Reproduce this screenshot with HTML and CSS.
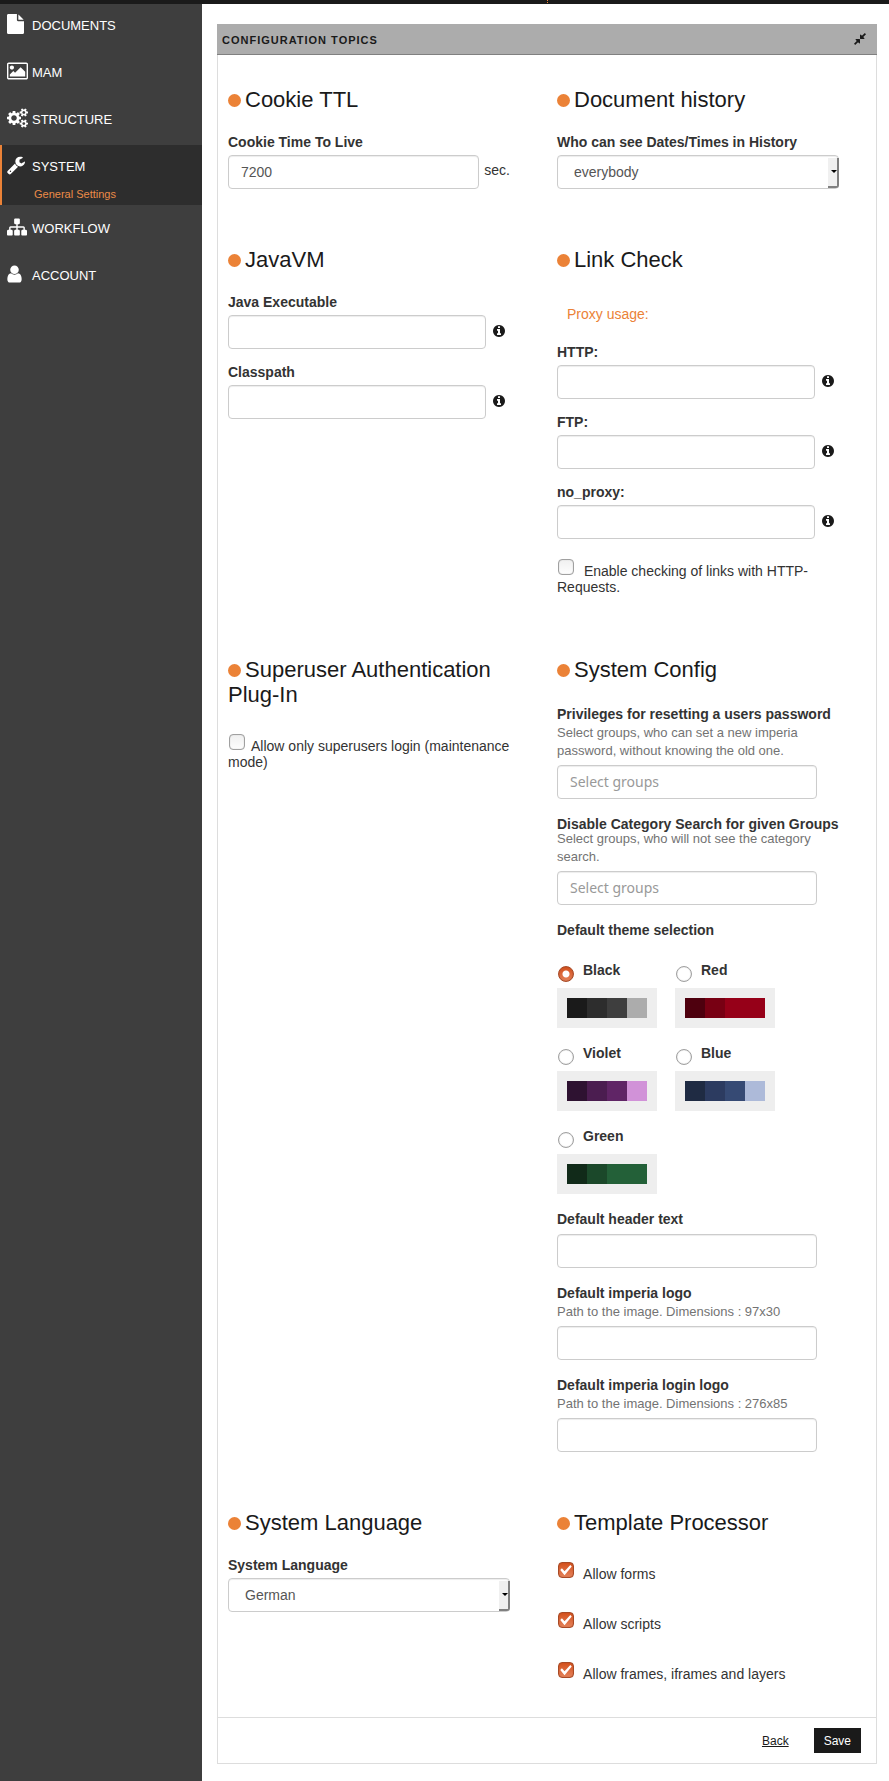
FILE: index.html
```html
<!DOCTYPE html>
<html lang="en">
<head>
<meta charset="utf-8">
<title>General Settings</title>
<link rel="stylesheet" href="styles.css">
</head>
<body>
<svg class="defs" aria-hidden="true">
  <symbol id="info" viewBox="128 128 1536 1536"><path d="M1152 1376v-160q0-14-9-23t-23-9h-96v-512q0-14-9-23t-23-9h-320q-14 0-23 9t-9 23v160q0 14 9 23t23 9h96v320h-96q-14 0-23 9t-9 23v160q0 14 9 23t23 9h448q14 0 23-9t9-23zm-128-896v-160q0-14-9-23t-23-9h-192q-14 0-23 9t-9 23v160q0 14 9 23t23 9h192q14 0 23-9t9-23zm640 416q0 209-103 385.5t-279.5 279.5-385.5 103-385.5-103-279.5-279.5-103-385.5 103-385.5 279.5-279.5 385.5-103 385.5 103 279.5 279.5 103 385.5z"/></symbol>
</svg>
<header class="topbar"><span class="topbar-mark"></span></header>
<div class="layout">
  <nav class="sidebar">
    <ul class="nav">
      <li class="nav-item"><a class="nav-link" href="#"><span class="nav-icon"><svg width="17" height="20" viewBox="128 0 1536 1792"><path d="M1152 512v-472q22 14 36 28l408 408q14 14 28 36h-472zm-128 32q0 40 28 68t68 28h544v1056q0 40-28 68t-68 28h-1344q-40 0-68-28t-28-68v-1600q0-40 28-68t68-28h800v544z"/></svg></span><span class="nav-text">DOCUMENTS</span></a></li>
      <li class="nav-item"><a class="nav-link" href="#"><span class="nav-icon"><svg width="21" height="20" viewBox="-64 0 1920 1792"><path d="M576 576q0 80-56 136t-136 56-136-56-56-136 56-136 136-56 136 56 56 136zm1024 384v448h-1408v-192l320-320 160 160 512-512zm96-704h-1600q-13 0-22.5 9.5t-9.5 22.5v1216q0 13 9.5 22.5t22.5 9.5h1600q13 0 22.5-9.5t9.5-22.5v-1216q0-13-9.5-22.5t-22.5-9.5zm160 32v1216q0 66-47 113t-113 47h-1600q-66 0-113-47t-47-113v-1216q0-66 47-113t113-47h1600q66 0 113 47t47 113z"/></svg></span><span class="nav-text">MAM</span></a></li>
      <li class="nav-item"><a class="nav-link" href="#"><span class="nav-icon"><svg width="21" height="20" viewBox="-64 0 1920 1792"><path d="M832 896q0-106-75-181t-181-75-181 75-75 181 75 181 181 75 181-75 75-181zm768 512q0-52-38-90t-90-38-90 38-38 90q0 53 37.5 90.5t90.5 37.5 90.5-37.5 37.5-90.5zm0-1024q0-52-38-90t-90-38-90 38-38 90q0 53 37.5 90.5t90.5 37.5 90.5-37.5 37.5-90.5zm-384 421v185q0 10-7 19.5t-16 10.5l-155 24q-11 35-32 76 34 48 90 115 7 11 7 20 0 12-7 19-23 30-82.5 89.5t-78.5 59.5q-11 0-21-7l-115-90q-37 19-77 31-11 108-23 155-7 24-30 24h-186q-11 0-20-7.5t-10-17.5l-23-153q-34-10-75-31l-118 89q-7 7-20 7-11 0-21-8-144-133-144-160 0-9 7-19 10-14 41-53t47-61q-23-44-35-82l-152-24q-10-1-17-9.5t-7-19.5v-185q0-10 7-19.5t16-10.5l155-24q11-35 32-76-34-48-90-115-7-11-7-20 0-12 7-20 22-30 82-89t79-59q11 0 21 7l115 90q34-18 77-32 11-108 23-154 7-24 30-24h186q11 0 20 7.5t10 17.5l23 153q34 10 75 31l118-89q8-7 20-7 11 0 21 8 144 133 144 160 0 8-7 19-12 16-42 54t-45 60q23 48 34 82l152 23q10 2 17 10.5t7 19.5zm640 533v140q0 16-149 31-12 27-30 52 51 113 51 138 0 4-4 7-122 71-124 71-8 0-46-47t-52-68q-20 2-30 2t-30-2q-14 21-52 68t-46 47q-2 0-124-71-4-3-4-7 0-25 51-138-18-25-30-52-149-15-149-31v-140q0-16 149-31 13-29 30-52-51-113-51-138 0-4 4-7 4-2 35-20t59-34 30-16q8 0 46 46.5t52 67.5q20-2 30-2t30 2q51-71 92-112l6-2q4 0 124 70 4 3 4 7 0 25-51 138 17 23 30 52 149 15 149 31zm0-1024v140q0 16-149 31-12 27-30 52 51 113 51 138 0 4-4 7-122 71-124 71-8 0-46-47t-52-68q-20 2-30 2t-30-2q-14 21-52 68t-46 47q-2 0-124-71-4-3-4-7 0-25 51-138-18-25-30-52-149-15-149-31v-140q0-16 149-31 13-29 30-52-51-113-51-138 0-4 4-7 4-2 35-20t59-34 30-16q8 0 46 46.5t52 67.5q20-2 30-2t30 2q51-71 92-112l6-2q4 0 124 70 4 3 4 7 0 25-51 138 17 23 30 52 149 15 149 31z"/></svg></span><span class="nav-text">STRUCTURE</span></a></li>
      <li class="nav-item nav-item-active"><a class="nav-link" href="#"><span class="nav-icon"><svg width="18" height="20" viewBox="64 0 1664 1792"><path d="M448 1472q0-26-19-45t-45-19-45 19-19 45 19 45 45 19 45-19 19-45zm644-420l-682 682q-37 37-90 37-52 0-91-37l-106-108q-38-36-38-90 0-53 38-91l681-681q39 98 114.5 173.5t173.5 114.5zm634-435q0 39-23 106-47 134-164.5 217.5t-258.5 83.5q-185 0-316.5-131.5t-131.5-316.5 131.5-316.5 316.5-131.5q58 0 121.5 16.5t107.5 46.5q16 11 16 28t-16 28l-293 169v224l193 107q5-3 79-48.5t135.5-81 70.5-35.5q15 0 23.5 10t8.5 25z"/></svg></span><span class="nav-text">SYSTEM</span></a>
        <a class="nav-sub" href="#">General Settings</a></li>
      <li class="nav-item"><a class="nav-link" href="#"><span class="nav-icon"><svg width="20" height="20" viewBox="0 0 1792 1792"><path d="M1792 1248v320q0 40-28 68t-68 28h-320q-40 0-68-28t-28-68v-320q0-40 28-68t68-28h96v-192h-512v192h96q40 0 68 28t28 68v320q0 40-28 68t-68 28h-320q-40 0-68-28t-28-68v-320q0-40 28-68t68-28h96v-192h-512v192h96q40 0 68 28t28 68v320q0 40-28 68t-68 28h-320q-40 0-68-28t-28-68v-320q0-40 28-68t68-28h96v-192q0-52 38-90t90-38h512v-192h-96q-40 0-68-28t-28-68v-320q0-40 28-68t68-28h320q40 0 68 28t28 68v320q0 40-28 68t-68 28h-96v192h512q52 0 90 38t38 90v192h96q40 0 68 28t28 68z"/></svg></span><span class="nav-text">WORKFLOW</span></a></li>
      <li class="nav-item"><a class="nav-link" href="#"><span class="nav-icon"><svg width="15" height="20" viewBox="256 0 1280 1792"><path d="M1536 1399q0 109-62.5 187t-150.5 78h-854q-88 0-150.5-78t-62.5-187q0-85 8.5-160.5t31.5-152 58.5-131 94-89 134.5-34.5q131 128 313 128t313-128q76 0 134.5 34.5t94 89 58.5 131 31.5 152 8.5 160.5zm-256-887q0 159-112.5 271.5t-271.5 112.5-271.5-112.5-112.5-271.5 112.5-271.5 271.5-112.5 271.5 112.5 112.5 271.5z"/></svg></span><span class="nav-text">ACCOUNT</span></a></li>
    </ul>
  </nav>
  <main class="main">
    <form class="panel">
      <div class="panel-head">
        <h1 class="panel-title">CONFIGURATION TOPICS</h1>
        <button class="icon-button" type="button" aria-label="Collapse"><svg width="12" height="12" viewBox="128 128 1536 1536"><path d="M896 960v448q0 26-19 45t-45 19-45-19l-144-144-332 332q-10 10-23 10t-23-10l-114-114q-10-10-10-23t10-23l332-332-144-144q-19-19-19-45t19-45 45-19h448q26 0 45 19t19 45zm755-672q0 13-10 23l-332 332 144 144q19 19 19 45t-19 45-45 19h-448q-26 0-45-19t-19-45v-448q0-26 19-45t45-19 45 19l144 144 332-332q10-10 23-10t23 10l114 114q10 10 10 23z"/></svg></button>
      </div>
      <div class="panel-body">
        <section class="section">
          <h2 class="heading">Cookie TTL</h2>
          <div class="field">
            <label class="label" for="ttl">Cookie Time To Live</label>
            <div class="row"><input class="input" id="ttl" type="text" value="7200"><span class="unit">sec.</span></div>
          </div>
        </section>
        <section class="section">
          <h2 class="heading">Document history</h2>
          <div class="field">
            <label class="label" for="history">Who can see Dates/Times in History</label>
            <div class="select-box"><select class="select" id="history"><option>everybody</option></select></div>
          </div>
        </section>
        <section class="section">
          <h2 class="heading">JavaVM</h2>
          <div class="field">
            <label class="label" for="java">Java Executable</label>
            <div class="row"><input class="input" id="java" type="text"><button class="icon-button info" type="button" aria-label="Info"><svg width="12" height="12"><use href="#info"/></svg></button></div>
          </div>
          <div class="field">
            <label class="label" for="classpath">Classpath</label>
            <div class="row"><input class="input" id="classpath" type="text"><button class="icon-button info" type="button" aria-label="Info"><svg width="12" height="12"><use href="#info"/></svg></button></div>
          </div>
        </section>
        <section class="section">
          <h2 class="heading">Link Check</h2>
          <p class="note">Proxy usage:</p>
          <div class="field">
            <label class="label" for="http">HTTP:</label>
            <div class="row"><input class="input" id="http" type="text"><button class="icon-button info" type="button" aria-label="Info"><svg width="12" height="12"><use href="#info"/></svg></button></div>
          </div>
          <div class="field">
            <label class="label" for="ftp">FTP:</label>
            <div class="row"><input class="input" id="ftp" type="text"><button class="icon-button info" type="button" aria-label="Info"><svg width="12" height="12"><use href="#info"/></svg></button></div>
          </div>
          <div class="field">
            <label class="label" for="noproxy">no_proxy:</label>
            <div class="row"><input class="input" id="noproxy" type="text"><button class="icon-button info" type="button" aria-label="Info"><svg width="12" height="12"><use href="#info"/></svg></button></div>
          </div>
          <label class="check"><input class="checkbox" type="checkbox"> Enable checking of links with HTTP-Requests.</label>
        </section>
        <section class="section">
          <h2 class="heading">Superuser Authentication Plug-In</h2>
          <label class="check"><input class="checkbox" type="checkbox">Allow only superusers login (maintenance mode)</label>
        </section>
        <section class="section section-config">
          <h2 class="heading">System Config</h2>
          <div class="field">
            <label class="label" for="privileges">Privileges for resetting a users password</label>
            <p class="help">Select groups, who can set a new imperia password, without knowing the old one.</p>
            <input class="input" id="privileges" type="text" placeholder="Select groups">
          </div>
          <div class="field">
            <label class="label label-clipped" for="category">Disable Category Search for given Groups</label>
            <p class="help">Select groups, who will not see the category search.</p>
            <input class="input" id="category" type="text" placeholder="Select groups">
          </div>
          <fieldset class="field themes">
            <legend class="label">Default theme selection</legend>
            <div class="theme-grid">
              <label class="theme"><span class="theme-name"><input class="radio" type="radio" name="theme" checked>Black</span><span class="swatch"><i class="k1"></i><i class="k2"></i><i class="k3"></i><i class="k4"></i></span></label>
              <label class="theme"><span class="theme-name"><input class="radio" type="radio" name="theme">Red</span><span class="swatch"><i class="r1"></i><i class="r2"></i><i class="r3"></i><i class="r3"></i></span></label>
              <label class="theme"><span class="theme-name"><input class="radio" type="radio" name="theme">Violet</span><span class="swatch"><i class="v1"></i><i class="v2"></i><i class="v3"></i><i class="v4"></i></span></label>
              <label class="theme"><span class="theme-name"><input class="radio" type="radio" name="theme">Blue</span><span class="swatch"><i class="b1"></i><i class="b2"></i><i class="b3"></i><i class="b4"></i></span></label>
              <label class="theme"><span class="theme-name"><input class="radio" type="radio" name="theme">Green</span><span class="swatch"><i class="g1"></i><i class="g2"></i><i class="g3"></i><i class="g3"></i></span></label>
            </div>
          </fieldset>
          <div class="field">
            <label class="label" for="headertext">Default header text</label>
            <input class="input" id="headertext" type="text">
          </div>
          <div class="field">
            <label class="label" for="logo">Default imperia logo</label>
            <p class="help">Path to the image. Dimensions : 97x30</p>
            <input class="input" id="logo" type="text">
          </div>
          <div class="field">
            <label class="label" for="loginlogo">Default imperia login logo</label>
            <p class="help">Path to the image. Dimensions : 276x85</p>
            <input class="input" id="loginlogo" type="text">
          </div>
        </section>
        <section class="section">
          <h2 class="heading">System Language</h2>
          <div class="field">
            <label class="label" for="language">System Language</label>
            <div class="select-box"><select class="select" id="language"><option>German</option></select></div>
          </div>
        </section>
        <section class="section">
          <h2 class="heading">Template Processor</h2>
          <label class="check"><input class="checkbox" type="checkbox" checked> Allow forms</label>
          <label class="check"><input class="checkbox" type="checkbox" checked> Allow scripts</label>
          <label class="check"><input class="checkbox" type="checkbox" checked> Allow frames, iframes and layers</label>
        </section>
      </div>
      <div class="panel-foot">
        <a class="back" href="#">Back</a>
        <button class="save" type="button">Save</button>
      </div>
    </form>
  </main>
</div>
</body>
</html>
```
FILE: styles.css
```css
* { box-sizing: border-box; }

body {
  margin: 0;
  min-height: 100vh;
  display: flex;
  flex-direction: column;
  background: #fff;
  color: #333;
  font: 14px/20px "Liberation Sans", Arial, sans-serif;
}

.defs { position: absolute; width: 0; height: 0; }
svg { display: block; fill: currentColor; }
p, h1, h2, ul, fieldset { margin: 0; padding: 0; }

.topbar { height: 4px; background: #1a1a1a; }
.topbar-mark {
  display: block;
  height: 3px;
  width: 1px;
  margin-left: 547px;
  background: repeating-linear-gradient(#eb8237 0 1px, #1a1a1a 1px 2px);
}

.layout { flex: 1; display: flex; }

/* Sidebar */
.sidebar { flex: none; width: 202px; background: #3e3e3e; }
.nav { list-style: none; }
.nav-item { border-left: 2px solid transparent; padding-bottom: 15px; }
.nav-item-active {
  padding-bottom: 3px;
  margin-bottom: 2px;
  background: #2d2d2d;
  border-left-color: #eb8237;
}
.nav-link {
  display: flex;
  padding: 10px 0 0 5px;
  color: #fff;
  font-size: 13px;
  text-decoration: none;
}
.nav-icon { width: 25px; }
.nav-text { padding-top: 2px; }
.nav-sub {
  display: block;
  margin-top: 9px;
  padding-left: 32px;
  color: #eb8b48;
  font-size: 11px;
  line-height: 16px;
  text-decoration: none;
}

/* Panel */
.main { flex: 1; min-width: 0; padding: 20px 12px 3px 15px; }
.panel { border: 1px solid #ddd; border-top: 0; }
.panel-head {
  display: flex;
  align-items: center;
  justify-content: space-between;
  height: 31px;
  margin: 0 -1px;
  padding: 0 11px 0 5px;
  background: #acacac;
  border-bottom: 1px solid #808080;
  color: #1a1a1a;
}
.panel-title { font-size: 11px; line-height: 20px; font-weight: bold; letter-spacing: 1px; padding-top: 2px; }
.icon-button { flex: none; padding: 0; border: 0; background: none; color: #1a1a1a; }
.panel-body {
  display: grid;
  grid-template-columns: 1fr 1fr;
  padding-bottom: 5px;
}
.section { min-width: 0; padding: 32px 37px 26px 10px; }

.heading {
  margin-bottom: 20px;
  color: #1a1a1a;
  font-size: 22px;
  line-height: 25px;
  font-weight: normal;
}
.heading::before {
  content: "";
  display: inline-block;
  width: 13px;
  height: 13px;
  margin-right: 4px;
  border-radius: 50%;
  background: #eb8237;
}

/* Fields */
.field { border: 0; }
.field + .field { margin-top: 13px; }
.label { display: block; padding: 0; margin-bottom: 3px; font-weight: bold; }
.row { display: flex; align-items: center; gap: 5px; }
.input, .select {
  display: block;
  width: 100%;
  height: 34px;
  padding: 6px 12px;
  border: 1px solid #ccc;
  border-radius: 4px;
  background: #fff;
  box-shadow: inset 0 1px 1px rgba(0, 0, 0, 0.075);
  color: #555;
  font: inherit;
}
.row .input { flex: 0 1 258px; min-width: 0; }
.input::placeholder { color: #999; font-family: "Noto Sans", sans-serif; opacity: 1; }
.unit { padding-bottom: 4px; }
.info { margin: 0 0 2px 2px; }

.select-box { position: relative; }
.select { appearance: none; padding: 0 16px; }
.select-box::before {
  content: "";
  position: absolute;
  top: 3px;
  right: 0;
  bottom: 1px;
  width: 9px;
  background: #f0f0f0;
  border: solid #808080;
  border-width: 0 2px 2px 0;
  border-bottom-right-radius: 3px;
  pointer-events: none;
}
.select-box::after {
  content: "";
  position: absolute;
  top: 15px;
  right: 2px;
  border: solid transparent;
  border-width: 3px 3px 0;
  border-top-color: #000;
  pointer-events: none;
}

.note { margin-bottom: 13px; padding: 12px 10px 5px; color: #eb8237; }

.check { display: block; margin: 27px 0 4px; line-height: 16px; }
.field + .check { margin-top: 20px; }
.check + .check { margin-top: 30px; }
.checkbox, .radio {
  appearance: none;
  width: 16px;
  height: 16px;
  margin: 0 6px 1px 1px;
  border: 1px solid #a0a0a0;
  border-radius: 4px;
  background: linear-gradient(#f0f0f0, #fdfdfd);
  box-shadow: inset 0 0 1px #aaa;
}
.checkbox { position: relative; }
.checkbox:checked {
  border-color: #a84a26;
  background: linear-gradient(#d4501c, #e4825a);
  box-shadow: inset 0 0 1px #a84a26;
}
.checkbox:checked::before {
  content: "";
  position: absolute;
  inset: 1px;
  background: #fff;
  clip-path: polygon(2% 50%, 16% 36%, 38% 60%, 86% 8%, 98% 20%, 38% 94%);
}

/* System config */
.section-config .heading { margin-bottom: 22px; }
.section-config .field + .field { margin-top: 15px; }
.section-config .label { margin-bottom: 5px; }
.section-config .label:has(+ .help) { margin-bottom: 0; }
.section-config .label-clipped:has(+ .help) { max-height: 34px; margin-bottom: -4px; overflow: hidden; }
.section-config .input { width: 260px; max-width: 100%; }
.help { margin-bottom: 5px; color: #737373; font-size: 13px; line-height: 18px; }

.theme-grid {
  display: grid;
  grid-template-columns: 100px 100px;
  gap: 15px 18px;
  padding-top: 15px;
}
.theme-name { display: flex; height: 28px; font-weight: bold; }
.radio { margin: 6px 9px 0 1px; border-radius: 50%; background: #fff; }
.radio:checked {
  border-color: #a84a26;
  background: radial-gradient(circle, #fff 0 3px, transparent 4px), linear-gradient(#d4501c, #e4825a);
  box-shadow: inset 0 0 1px #a84a26;
}
.swatch { display: flex; padding: 10px; background: #eee; }
.swatch i { flex: 1; height: 20px; }
.k1 { background: #1a1a1a; }
.k2 { background: #2d2d2d; }
.k3 { background: #3e3e3e; }
.k4 { background: #acacac; }
.r1 { background: #4e000e; }
.r2 { background: #780013; }
.r3 { background: #960018; }
.v1 { background: #2e1231; }
.v2 { background: #4b1d50; }
.v3 { background: #602566; }
.v4 { background: #d192d8; }
.b1 { background: #1f2b43; }
.b2 { background: #2c3b60; }
.b3 { background: #364a74; }
.b4 { background: #adbad9; }
.g1 { background: #112a19; }
.g2 { background: #1b482a; }
.g3 { background: #236038; }

/* Footer */
.panel-foot {
  display: flex;
  align-items: center;
  justify-content: flex-end;
  gap: 25px;
  padding: 10px 15px;
  border-top: 1px solid #ddd;
  font-size: 12px;
}
.back { color: #1a1a1a; }
.save {
  height: 25px;
  padding: 0 10px;
  border: 0;
  background: #1a1a1a;
  color: #fff;
  font: inherit;
}
```
